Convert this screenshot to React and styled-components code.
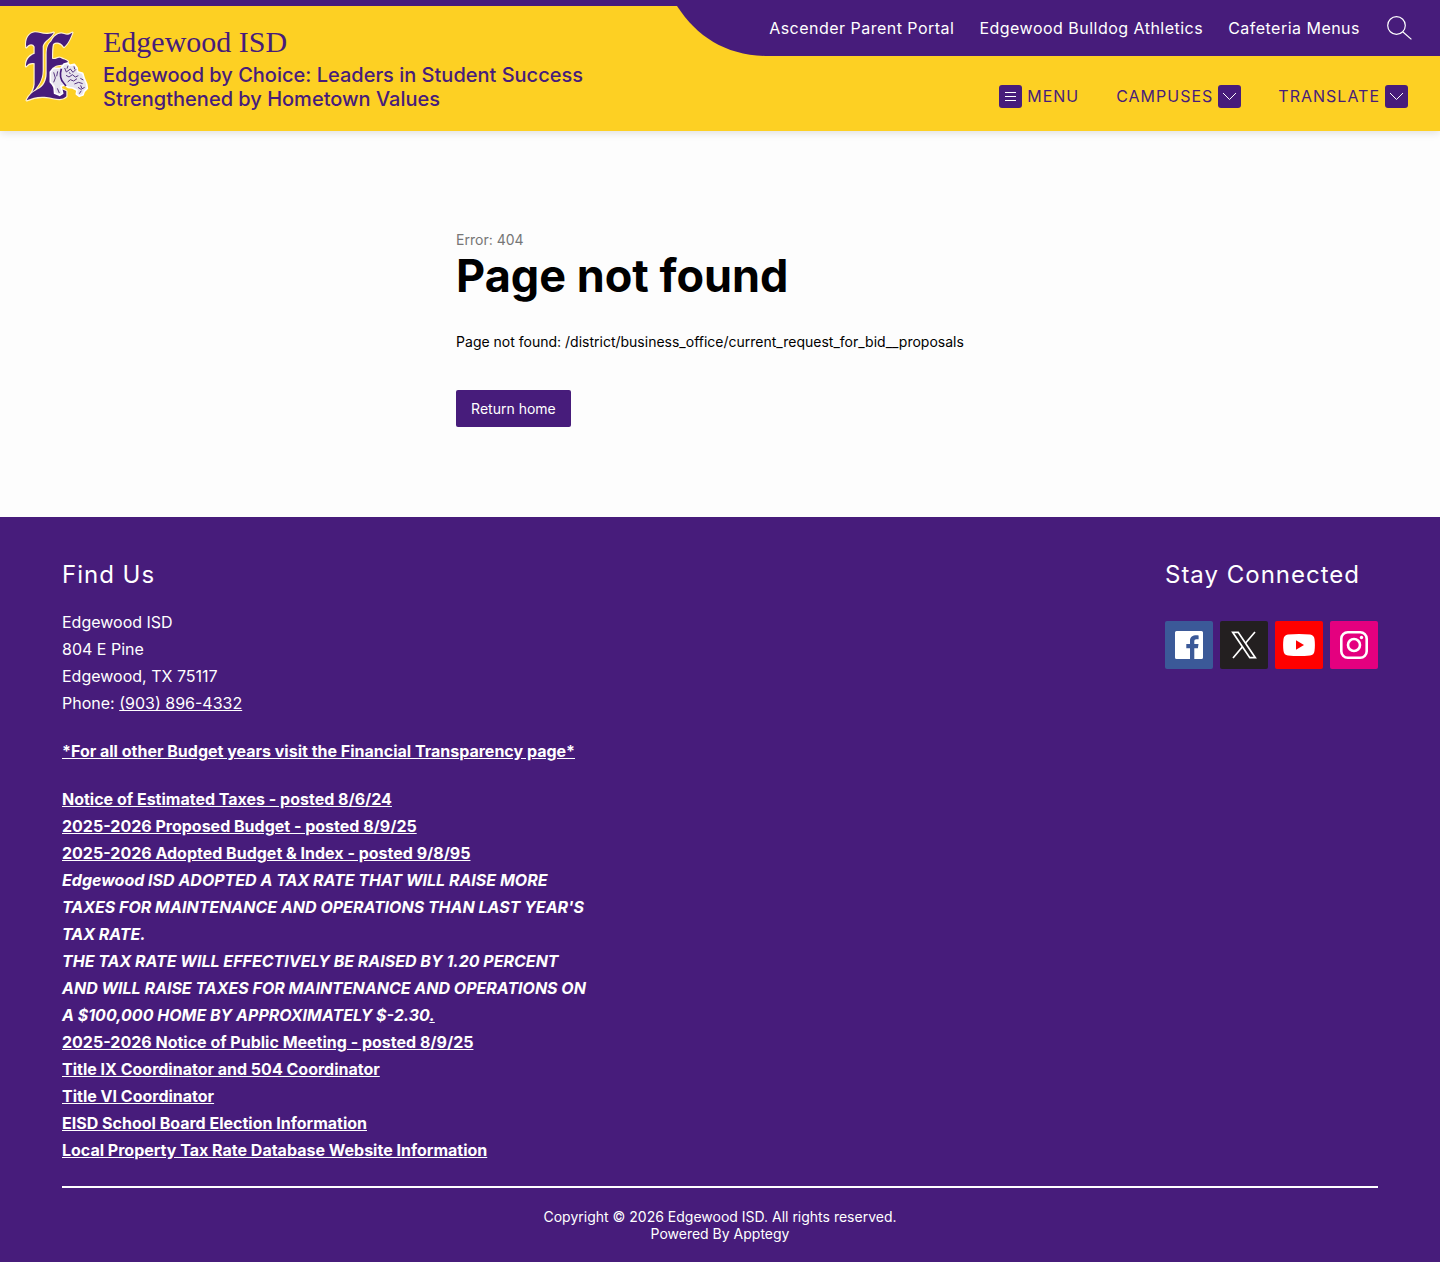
import styled, { createGlobalStyle } from "styled-components";

const purple = "#471c7b";
const yellow = "#fdd023";

const GlobalStyle = createGlobalStyle`
    * {
        box-sizing: border-box;
    }

    body {
        margin: 0;
        background-color: #fdfdfd;
        font-family: "Inter", "Liberation Sans", sans-serif;
    }

    h1, h2, p {
        margin: 0;
    }
`;

const Container = styled.div`
    display: flex;
    flex-direction: column;
    min-height: 100vh;
`;

const Header = styled.header`
    display: flex;
    justify-content: space-between;
    min-height: 131px;
    border-top: 6px solid ${purple};
    background-color: ${yellow};
    box-shadow: 0 2px 8px rgba(0, 0, 0, 0.12);
`;

const Brand = styled.a`
    display: flex;
    align-items: flex-start;
    gap: 14px;
    padding: 20px 0 0 23px;
    color: ${purple};
    text-decoration: none;
`;

const LogoImage = styled.svg`
    display: block;
    flex-shrink: 0;
    width: 66px;
    height: 74px;
    margin-top: 3px;
`;

const BrandText = styled.div`
    display: flex;
    flex-direction: column;
    max-width: 500px;
`;

const SchoolName = styled.span`
    font-family: "Liberation Serif", serif;
    font-size: 30px;
    line-height: 32px;
    margin-bottom: 5px;
`;

const Tagline = styled.span`
    font-size: 20px;
    font-weight: 500;
    line-height: 24px;
`;

const HeaderRight = styled.div`
    display: flex;
    flex-direction: column;
    align-items: flex-end;
`;

const TopBar = styled.div`
    display: flex;
    height: 50px;
`;

const Curve = styled.svg`
    display: block;
    width: 92px;
    height: 50px;
`;

const TopLinks = styled.nav`
    display: flex;
    align-items: center;
    gap: 25px;
    padding: 0 28px 6px 0;
    background-color: ${purple};
`;

const TopLink = styled.a`
    color: #fff;
    font-size: 16px;
    line-height: 20px;
    letter-spacing: 0.03em;
    text-decoration: none;
    white-space: nowrap;
`;

const SearchButton = styled.button`
    display: flex;
    margin-left: 2px;
    padding: 0;
    border: none;
    background: none;
    color: #fff;
    cursor: pointer;
`;

const MainNav = styled.nav`
    display: flex;
    gap: 37px;
    padding: 29px 32px 0 0;
`;

const NavButton = styled.button`
    display: flex;
    align-items: flex-start;
    gap: 5px;
    padding: 0;
    border: none;
    background: none;
    color: ${purple};
    font-family: inherit;
    font-size: 16px;
    line-height: 22px;
    letter-spacing: 1px;
    cursor: pointer;
`;

const NavIcon = styled.span`
    display: flex;
    align-items: center;
    justify-content: center;
    width: 23px;
    height: 23px;
    border-radius: 3px;
    background-color: ${purple};
    color: #fff;
`;

const Main = styled.main`
    display: flex;
    justify-content: center;
    padding: 100px 20px 90px;
`;

const ErrorBox = styled.div`
    padding-right: 20px;
`;

const ErrorCode = styled.p`
    color: #767676;
    font-size: 14px;
    line-height: 18px;
`;

const Title = styled.h1`
    font-size: 45px;
    font-weight: 700;
    line-height: 54px;
    margin-bottom: 30px;
`;

const Message = styled.p`
    font-size: 14px;
    line-height: 18px;
    margin-bottom: 39px;
`;

const HomeLink = styled.a`
    display: inline-block;
    padding: 10px 15px;
    border-radius: 2px;
    background-color: ${purple};
    color: #fff;
    font-size: 14px;
    line-height: 17px;
    text-decoration: none;
`;

const Footer = styled.footer`
    flex: 1;
    padding: 42px 62px 19px;
    background-color: ${purple};
    color: #fff;
`;

const FooterColumns = styled.div`
    display: flex;
    justify-content: space-between;
    padding-bottom: 22px;
    border-bottom: 2px solid #fff;
`;

const FindUs = styled.section`
    width: 40%;
`;

const FooterTitle = styled.h2`
    font-size: 24px;
    font-weight: 400;
    line-height: 32px;
    letter-spacing: 1px;
    margin-bottom: ${(props) => props.$gap}px;
`;

const Text = styled.p`
    font-size: 16px;
    line-height: 27px;
    margin-bottom: 21px;

    &:last-child {
        margin-bottom: 0;
    }
`;

const FooterLink = styled.a`
    color: #fff;
    font-weight: ${(props) => (props.$bold ? 700 : 400)};
    text-decoration: underline;
`;

const Notice = styled.em`
    font-weight: 700;
`;

const SocialLinks = styled.div`
    display: flex;
    gap: 7px;
`;

const SocialLink = styled.a`
    display: flex;
    align-items: center;
    justify-content: center;
    width: 48px;
    height: 48px;
    border-radius: 2px;
    background-color: ${(props) => props.$color};
    color: #fff;
`;

const Copyright = styled.p`
    padding-top: 20px;
    font-size: 14px;
    line-height: 17px;
    text-align: center;
`;

const PlainLink = styled.a`
    color: inherit;
    text-decoration: none;
`;

const Logo = () => (
    <LogoImage viewBox="9 9 198 222" aria-hidden="true">
        <g fill="#471c7b" stroke="#fff3cf" strokeWidth="7" strokeLinejoin="round" paintOrder="stroke">
            <path d="M19 64C15 40 27 20 45 19C62 19 72 30 101 20C92 38 73 42 68 60V134C68 162 54 182 34 203C42 190 45 179 44 165V112C33 109 25 112 18 121C17 103 28 89 44 83V62C38 51 26 54 19 64Z" />
            <path d="M94 46C102 29 117 18 132 24C141 28 148 26 157 20C150 40 144 52 132 63C123 49 109 46 99 54C96 64 96 78 96 98C107 103 113 92 122 96C129 101 137 100 144 107C137 121 125 113 108 119C100 122 97 128 97 138V180C104 194 124 184 139 196V211C123 227 102 215 80 213C56 210 37 215 20 223C29 203 43 196 59 187C76 174 81 157 80 134V86C80 66 83 56 94 46Z" />
        </g>
        <path d="M91 138L100 127L123 126L132 114L143 111L149 118L163 115L171 125L173 137L188 142L193 158L200 174L202 187L193 196L189 207L178 211L169 204L171 193L158 186L144 184L134 177L123 181L128 202L119 208L104 202L102 181L91 168Z" fill="#e7e4ed" stroke="#fff" strokeWidth="5" strokeLinejoin="round" />
        <path d="M124 128C119 145 121 160 131 171L138 180" fill="none" stroke="#471c7b" strokeWidth="5" />
        <path d="M101 139L106 156L101 169M113 136L110 151M112 187L118 201M134 126L139 138L151 129L159 139L168 130M138 148L147 153L157 146L166 153L175 149M143 168L151 161L161 165L171 158M163 174L176 169L188 173M181 157L190 162M174 184L183 190L194 184M178 203L184 194M144 119L141 128M162 121L164 130M148 139L151 144M182 178L185 186" fill="none" stroke="#56337f" strokeWidth="3" />
    </LogoImage>
);

const SearchIcon = () => (
    <svg width="25" height="25" viewBox="0 0 25 25" fill="none" stroke="currentColor" strokeWidth="1.2" aria-hidden="true">
        <circle cx="9.5" cy="9.5" r="8.8" />
        <path d="M16 16L24.4 23.4" />
    </svg>
);

const MenuIcon = () => (
    <svg width="13" height="11" viewBox="0 0 13 11" stroke="currentColor" aria-hidden="true">
        <path d="M1 1.5H12M1 5.5H12M1 9.5H12" />
    </svg>
);

const ChevronIcon = () => (
    <svg width="15" height="9" viewBox="0 0 15 9" fill="none" stroke="currentColor" aria-hidden="true">
        <path d="M1 1L7.5 7.5L14 1" />
    </svg>
);

const FacebookIcon = () => (
    <svg width="28" height="28" viewBox="0 0 28 28" aria-hidden="true">
        <path fill="currentColor" d="M1.5 0H26.5Q28 0 28 1.5V26.5Q28 28 26.5 28H19.3V17.2H22.9L23.5 13H19.3V10.3C19.3 9 19.9 8.3 21.4 8.3H23.6V4.5C19 3.9 15 4.9 15 9.8V13H11.3V17.2H15V28H1.5Q0 28 0 26.5V1.5Q0 0 1.5 0Z" />
    </svg>
);

const XIcon = () => (
    <svg width="26" height="28" viewBox="0 0 26 28" fill="none" stroke="currentColor" aria-hidden="true">
        <path strokeWidth="1.7" d="M1.7 1.3H7.2L24.3 26.7H18.8Z" />
        <path strokeWidth="1.7" d="M24 1L14.4 12.3M11.7 15.5L2 27" />
    </svg>
);

const YoutubeIcon = () => (
    <svg width="32" height="24" viewBox="0 0 32 24" aria-hidden="true">
        <path fill="currentColor" d="M5 1.5Q16 .5 27 1.5Q31 2 31.5 6Q32.3 12 31.5 18Q31 22 27 22.5Q16 23.5 5 22.5Q1 22 .5 18Q-.3 12 .5 6Q1 2 5 1.5Z" />
        <path fill="#ff0000" d="M13 7.3V16.7L21 12Z" />
    </svg>
);

const InstagramIcon = () => (
    <svg width="28" height="28" viewBox="0 0 28 28" fill="none" stroke="currentColor" strokeWidth="2.6" aria-hidden="true">
        <rect x="1.3" y="1.3" width="25.4" height="25.4" rx="6.5" />
        <circle cx="14" cy="14" r="6" />
        <circle cx="21.5" cy="6.5" r="1.7" fill="currentColor" stroke="none" />
    </svg>
);

const topLinks = ["Ascender Parent Portal", "Edgewood Bulldog Athletics", "Cafeteria Menus"];

const socials = [
    { name: "Facebook", color: "#3b5998", Icon: FacebookIcon },
    { name: "X", color: "#231f20", Icon: XIcon },
    { name: "YouTube", color: "#ff0000", Icon: YoutubeIcon },
    { name: "Instagram", color: "#e4007f", Icon: InstagramIcon },
];

const App = () => {
    return (
        <Container>
            <GlobalStyle />
            <Header>
                <Brand href="#">
                    <Logo />
                    <BrandText>
                        <SchoolName>Edgewood ISD</SchoolName>
                        <Tagline>Edgewood by Choice: Leaders in Student Success Strengthened by Hometown Values</Tagline>
                    </BrandText>
                </Brand>
                <HeaderRight>
                    <TopBar>
                        <Curve viewBox="0 0 92 50" aria-hidden="true">
                            <path d="M0 0C21 32 50 50 92 50V0Z" fill={purple} />
                        </Curve>
                        <TopLinks>
                            {topLinks.map((link) => (
                                <TopLink href="#" key={link}>{link}</TopLink>
                            ))}
                            <SearchButton aria-label="Search">
                                <SearchIcon />
                            </SearchButton>
                        </TopLinks>
                    </TopBar>
                    <MainNav>
                        <NavButton>
                            <NavIcon><MenuIcon /></NavIcon>
                            MENU
                        </NavButton>
                        <NavButton>
                            CAMPUSES
                            <NavIcon><ChevronIcon /></NavIcon>
                        </NavButton>
                        <NavButton>
                            TRANSLATE
                            <NavIcon><ChevronIcon /></NavIcon>
                        </NavButton>
                    </MainNav>
                </HeaderRight>
            </Header>
            <Main>
                <ErrorBox>
                    <ErrorCode>Error: 404</ErrorCode>
                    <Title>Page not found</Title>
                    <Message>Page not found: /district/business_office/current_request_for_bid__proposals</Message>
                    <HomeLink href="#">Return home</HomeLink>
                </ErrorBox>
            </Main>
            <Footer>
                <FooterColumns>
                    <FindUs>
                        <FooterTitle $gap={18}>Find Us</FooterTitle>
                        <Text>
                            Edgewood ISD<br />
                            804 E Pine<br />
                            Edgewood, TX 75117<br />
                            Phone: <FooterLink href="tel:9038964332">(903) 896-4332</FooterLink>
                        </Text>
                        <Text>
                            <FooterLink $bold href="#">*For all other Budget years visit the Financial Transparency page*</FooterLink>
                        </Text>
                        <Text>
                            <FooterLink $bold href="#">Notice of Estimated Taxes - posted 8/6/24</FooterLink><br />
                            <FooterLink $bold href="#">2025-2026 Proposed Budget - posted 8/9/25</FooterLink><br />
                            <FooterLink $bold href="#">2025-2026 Adopted Budget &amp; Index - posted 9/8/95</FooterLink><br />
                            <Notice>
                                Edgewood ISD ADOPTED A TAX RATE THAT WILL RAISE MORE TAXES FOR MAINTENANCE AND OPERATIONS THAN LAST YEAR'S TAX RATE.<br />
                                THE TAX RATE WILL EFFECTIVELY BE RAISED BY 1.20 PERCENT AND WILL RAISE TAXES FOR MAINTENANCE AND OPERATIONS ON A $100,000 HOME BY APPROXIMATELY $-2.30<FooterLink $bold href="#">.</FooterLink>
                            </Notice><br />
                            <FooterLink $bold href="#">2025-2026 Notice of Public Meeting - posted 8/9/25</FooterLink><br />
                            <FooterLink $bold href="#">Title IX Coordinator and 504 Coordinator</FooterLink><br />
                            <FooterLink $bold href="#">Title VI Coordinator</FooterLink><br />
                            <FooterLink $bold href="#">EISD School Board Election Information</FooterLink><br />
                            <FooterLink $bold href="#">Local Property Tax Rate Database Website Information</FooterLink>
                        </Text>
                    </FindUs>
                    <section>
                        <FooterTitle $gap={30}>Stay Connected</FooterTitle>
                        <SocialLinks>
                            {socials.map(({ name, color, Icon }) => (
                                <SocialLink href="#" key={name} $color={color} aria-label={name}>
                                    <Icon />
                                </SocialLink>
                            ))}
                        </SocialLinks>
                    </section>
                </FooterColumns>
                <Copyright>
                    Copyright © 2026 Edgewood ISD. All rights reserved.<br />
                    Powered By <PlainLink href="#">Apptegy</PlainLink>
                </Copyright>
            </Footer>
        </Container>
    );
};

export default App;
